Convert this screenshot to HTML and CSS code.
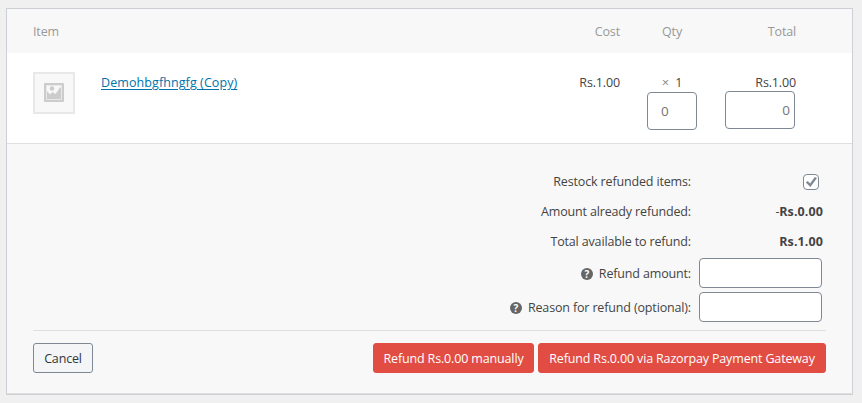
FILE: index.html
```html
<!DOCTYPE html>
<html lang="en">
<head>
<meta charset="utf-8">
<title>Order items refund</title>
<link rel="stylesheet" href="styles.css">
</head>
<body>
<main class="panel">
  <div class="row head">
    <span class="item">Item</span>
    <span class="cost">Cost</span>
    <span class="qty">Qty</span>
    <span class="total">Total</span>
  </div>
  <div class="row line">
    <div class="thumb">
      <svg width="20" height="20" viewBox="0 0 20 20"><rect y="0" width="20" height="19" rx="1" fill="#ccc"/><path d="M2.500 2.500h15v14h-15z" fill="#f8f8f8" stroke="#e9e9ec"/><circle cx="8" cy="5.500" r="2.300" fill="#ccc"/><path d="M3 16V8l3 3.500L8.500 9l3 2L14 7.500 16 4l1 1v11z" fill="#ccc"/></svg>
    </div>
    <div class="name"><a href="#">Demohbgfhngfg (Copy)</a></div>
    <div class="cost">Rs.1.00</div>
    <div class="qty"><div class="count"><small>×</small>1</div><input class="qty-input" type="text" placeholder="0"></div>
    <div class="total"><div class="sum">Rs.1.00</div><input class="total-input" type="text" placeholder="0"></div>
  </div>
  <section class="refund">
    <div class="totals">
      <label>Restock refunded items:</label>
      <div class="value"><span class="check"><svg width="14" height="14" viewBox="0 0 14 14"><path d="M1.800 7.500l2-1.500 2.300 2.500 4.700-6.500 2.200 1-6.600 9z" fill="#7e8993"/></svg></span></div>
      <label>Amount already refunded:</label>
      <div class="value">-<b>Rs.0.00</b></div>
      <label>Total available to refund:</label>
      <div class="value"><b>Rs.1.00</b></div>
      <label><span class="tip">?</span>Refund amount:</label>
      <input type="text">
      <label><span class="tip">?</span>Reason for refund (optional):</label>
      <input type="text">
    </div>
    <div class="actions">
      <button class="cancel">Cancel</button>
      <button class="primary manual">Refund Rs.0.00 manually</button>
      <button class="primary gateway">Refund Rs.0.00 via Razorpay Payment Gateway</button>
    </div>
  </section>
</main>
</body>
</html>
```
FILE: styles.css
```css
* { box-sizing: border-box; }
body {
  margin: 0;
  padding: 8px 9px 8px 6px;
  background: #f0f0f0;
  color: #444;
  font: 12.5px/20px "Segoe UI", "Open Sans", "Noto Sans", sans-serif;
  letter-spacing: -0.15px;
}
.panel {
  height: 386px;
  background: #f8f8f8;
  border: 1px solid #ccd0d4;
  border-bottom-color: #dfdfdf;
  box-shadow: 0 1px 0 #ccd0d4;
}
.row {
  display: grid;
  grid-template-columns: 68px 1fr 60px 105px 71px;
  padding: 0 56px 0 26px;
}
.head { height: 44px; padding-top: 2px; align-items: center; color: #999; }
.head .item { grid-column: 1 / 3; }
.cost, .total { text-align: right; }
.qty { margin-left: 27px; width: 50px; text-align: center; }
.line {
  height: 91px;
  padding-top: 19px;
  background: #fff;
  border-bottom: 1px solid #dfdfdf;
}
.thumb {
  width: 42px;
  height: 42px;
  display: grid;
  place-items: center;
  background: #f8f8f8;
  border: 2px solid #e8e8e8;
}
.name a { color: #0073aa; text-underline-offset: 1.5px; letter-spacing: 0.09px; }
.count small { color: #888; font-size: 13px; line-height: 1; margin-right: 6px; }
.name, .line .cost, .count, .sum { line-height: 22px; }
.count, .sum { height: 20px; }
input {
  display: block;
  font: inherit;
  color: #555;
  background: #fff;
  border: 1px solid #7e8993;
  border-radius: 4px;
  outline: 0;
}
input::placeholder { color: #757575; opacity: 1; font-size: 13.5px; }
.qty-input { width: 50px; height: 38px; padding: 0 13px; }
.total-input { width: 70px; height: 38px; padding: 0 4px; text-align: right; margin-top: -1px; }
.totals {
  display: grid;
  grid-template-columns: 1fr 123px;
  grid-template-rows: 30px 30px 30px 34px 34px;
  column-gap: 8px;
  align-items: center;
  padding: 23px 30px 0 26px;
}
.totals label { display: flex; justify-content: flex-end; align-items: center; }
.totals input { width: 123px; height: 30px; margin-bottom: 2px; }
.value { text-align: right; margin-right: -1px; }
.value b { letter-spacing: 0.1px; }
.check {
  display: grid;
  place-items: center;
  width: 16px;
  height: 16px;
  margin-left: auto;
  margin-right: 4px;
  background: #fff;
  border: 1px solid #7e8993;
  border-radius: 4px;
}
.tip {
  width: 12px;
  height: 12px;
  margin-right: 6px;
  border-radius: 50%;
  background: #666;
  color: #fff;
  font-size: 10px;
  font-weight: 700;
  line-height: 12px;
  text-align: center;
}
.actions {
  display: flex;
  gap: 4px;
  margin: 5px 26px 0;
  padding-top: 12px;
  border-top: 1px solid #dfdfdf;
}
button {
  height: 30px;
  padding: 1px 0 0;
  font: inherit;
  letter-spacing: inherit;
  white-space: nowrap;
  border: 1px solid #e14d43;
  border-radius: 3px;
}
.cancel { width: 60px; margin-right: auto; color: #32373c; background: #f3f5f6; border-color: #7e8993; }
.primary { color: #fff; background: #e14d43; }
.manual { width: 161px; }
.gateway { width: 288px; }
```
